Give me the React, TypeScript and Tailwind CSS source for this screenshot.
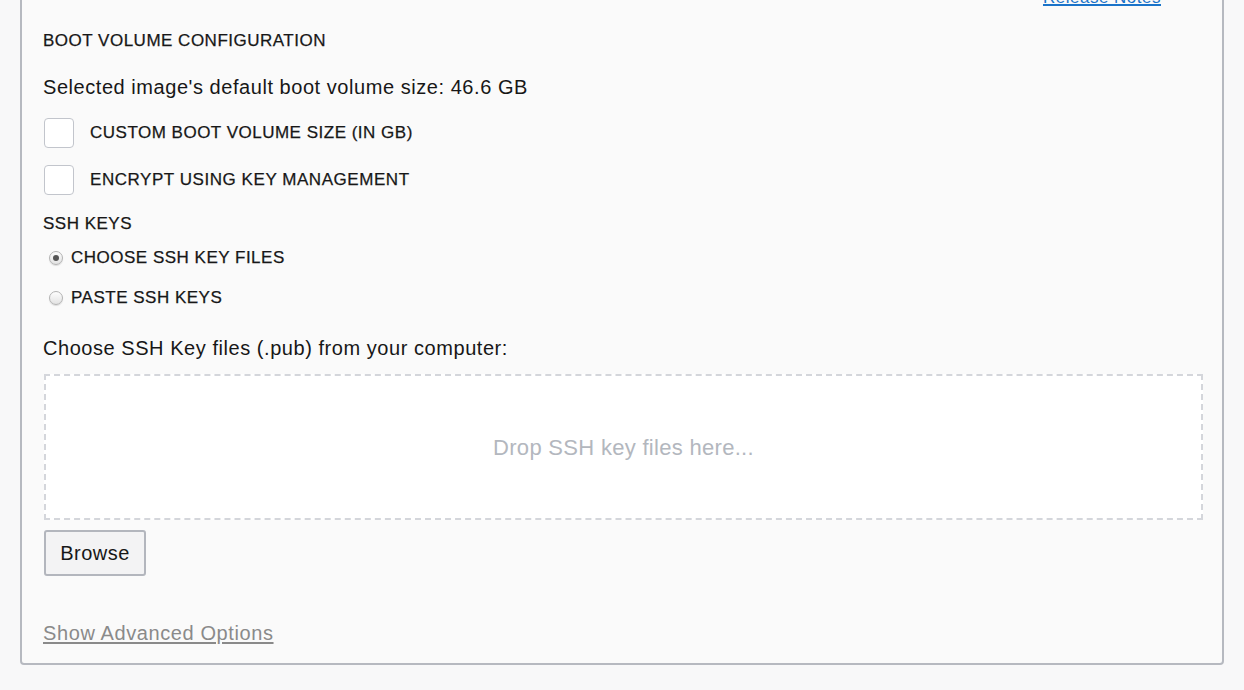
import React, { useState } from "react";

const App: React.FC = () => {
  const [custom, setCustom] = useState(false);
  const [encrypt, setEncrypt] = useState(false);
  const [mode, setMode] = useState("files");

  return (
    <div
      className="min-h-[690px] bg-[#f8f8f9] px-[20px] pb-[26px] text-[#171717]"
      style={{ fontFamily: '"Liberation Sans", Arial, sans-serif' }}
    >
      <div className="-mt-[24px] rounded-[4px] border-2 border-[#b6b9c0] bg-[#fafafa] pl-[21px] pr-[19px] pt-[8px] pb-[16px]">
        <div className="flex h-[24px] justify-end pr-[42px]">
          <a href="#" className="text-[17px] leading-[24px] tracking-[0.5px] text-[#1a73c9] underline decoration-2">
            Release Notes
          </a>
        </div>

        <h2 className="mt-[20px] text-[17px] leading-[22px] tracking-[0.5px] [-webkit-text-stroke:0.25px_#171717]">
          BOOT VOLUME CONFIGURATION
        </h2>

        <p className="mt-[24px] text-[20px] leading-[22px] tracking-[0.55px]">
          Selected image's default boot volume size: 46.6 GB
        </p>

        <label className="mt-[20px] flex items-center gap-[16px]">
          <input
            type="checkbox"
            checked={custom}
            onChange={() => setCustom(!custom)}
            className="ml-px h-[30px] w-[30px] appearance-none rounded-[4px] border-[1.5px] border-[#c2c5cc] bg-white"
          />
          <span className="text-[17px] leading-[22px] tracking-[0.5px] [-webkit-text-stroke:0.25px_#171717]">
            CUSTOM BOOT VOLUME SIZE (IN GB)
          </span>
        </label>

        <label className="mt-[17px] flex items-center gap-[16px]">
          <input
            type="checkbox"
            checked={encrypt}
            onChange={() => setEncrypt(!encrypt)}
            className="ml-px h-[30px] w-[30px] appearance-none rounded-[4px] border-[1.5px] border-[#c2c5cc] bg-white"
          />
          <span className="text-[17px] leading-[22px] tracking-[0.55px] [-webkit-text-stroke:0.25px_#171717]">
            ENCRYPT USING KEY MANAGEMENT
          </span>
        </label>

        <h3 className="mt-[18px] text-[17px] leading-[22px] tracking-[0.5px] [-webkit-text-stroke:0.25px_#171717]">
          SSH KEYS
        </h3>

        <div className="mt-[12px] flex flex-col gap-[18px] pl-[6px]">
          {[
            { id: "files", label: "CHOOSE SSH KEY FILES" },
            { id: "paste", label: "PASTE SSH KEYS" },
          ].map((opt) => (
            <label key={opt.id} className="flex items-center gap-[8px]" onClick={() => setMode(opt.id)}>
              <span className="flex h-[14px] w-[14px] items-center justify-center rounded-full border border-[#b3b3b3] bg-gradient-to-b from-[#fdfdfd] to-[#e3e3e3] shadow-[0_1px_1px_rgba(0,0,0,0.12)]">
                {mode === opt.id && <span className="h-[6px] w-[6px] rounded-full bg-[#555]" />}
              </span>
              <span className="text-[17px] leading-[22px] tracking-[0.5px] [-webkit-text-stroke:0.25px_#171717]">
                {opt.label}
              </span>
            </label>
          ))}
        </div>

        <p className="mt-[28px] text-[20px] leading-[22px] tracking-[0.55px]">
          Choose SSH Key files (.pub) from your computer:
        </p>

        <div className="ml-px mt-[15px] flex h-[146px] items-center justify-center border-2 border-dashed border-[#d4d6db] bg-white">
          <span className="text-[22px] tracking-[0.3px] text-[#b3b7be]">Drop SSH key files here...</span>
        </div>

        <button
          type="button"
          className="ml-px mt-[10px] h-[46px] w-[102px] rounded-[3px] border-2 border-[#b3b6bd] bg-[#f3f3f4] text-[20px] tracking-[0.5px] text-[#171717]"
        >
          Browse
        </button>

        <div className="mt-[46px]">
          <a href="#" className="text-[20px] leading-[22px] tracking-[0.6px] text-[#8a8a8a] underline decoration-2 underline-offset-2">
            Show Advanced Options
          </a>
        </div>
      </div>
    </div>
  );
};

export default App;
